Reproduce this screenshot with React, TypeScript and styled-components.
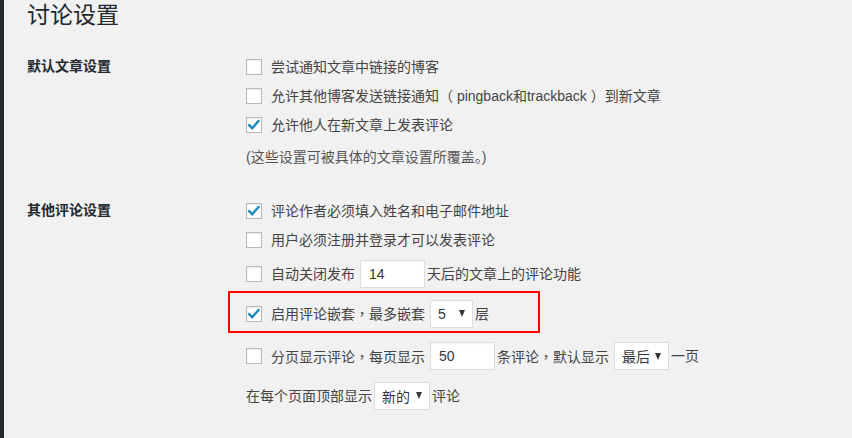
import React from 'react';
import styled, { createGlobalStyle } from 'styled-components';

const GlobalStyle = createGlobalStyle`
  html, body {
    margin: 0;
    padding: 0;
    background: #f1f1f1;
  }
  body {
    font-family: "Liberation Sans", "Noto Sans CJK SC", sans-serif;
    font-size: 14px;
    color: #444;
  }
`;

export default function App() {
  return (
    <>
      <GlobalStyle />
      <Page>
        <SideStrip />
        <Main>
          <Title>讨论设置</Title>

          <Section>
            <Label>默认文章设置</Label>
            <Fields>
              <Row $h={29}>
                <Checkbox />
                <Text>尝试通知文章中链接的博客</Text>
              </Row>
              <Row $h={29}>
                <Checkbox />
                <Text>
                  允许其他博客发送链接通知<Punct>（</Punct> pingback和trackback <Punct>）</Punct>到新文章
                </Text>
              </Row>
              <Row $h={29}>
                <Checkbox checked />
                <Text>允许他人在新文章上发表评论</Text>
              </Row>
              <Note>(这些设置可被具体的文章设置所覆盖。)</Note>
            </Fields>
          </Section>

          <Section $top={23}>
            <Label>其他评论设置</Label>
            <Fields>
              <Row $h={29}>
                <Checkbox checked />
                <Text>评论作者必须填入姓名和电子邮件地址</Text>
              </Row>
              <Row $h={29}>
                <Checkbox />
                <Text>用户必须注册并登录才可以发表评论</Text>
              </Row>
              <Row $h={39}>
                <Checkbox />
                <Text>自动关闭发布</Text>
                <NumberBox $w={65}>14</NumberBox>
                <Text>天后的文章上的评论功能</Text>
              </Row>
              <Highlight>
                <Checkbox checked />
                <Text>
                  启用评论嵌套<Punct>，</Punct>最多嵌套
                </Text>
                <Select $w={43}>5</Select>
                <Text>层</Text>
              </Highlight>
              <Row $h={40} $top={3}>
                <Checkbox />
                <Text>
                  分页显示评论<Punct>，</Punct>每页显示
                </Text>
                <NumberBox $w={65}>50</NumberBox>
                <Text>
                  条评论<Punct>，</Punct>默认显示
                </Text>
                <Select $w={55}>最后</Select>
                <Text>一页</Text>
              </Row>
              <Row $h={39}>
                <Text>在每个页面顶部显示</Text>
                <Select $w={56} $gap={2}>新的</Select>
                <Text>评论</Text>
              </Row>
            </Fields>
          </Section>
        </Main>
      </Page>
    </>
  );
}

function Checkbox({ checked }: { checked?: boolean }) {
  return (
    <Box>
      {checked && (
        <svg width="14" height="14" viewBox="0 0 14 14">
          <path
            d="M2.2 7.2 L5.2 10.2 L11.4 3.2"
            fill="none"
            stroke="#1e8cbe"
            strokeWidth="2.4"
            strokeLinecap="square"
          />
        </svg>
      )}
    </Box>
  );
}

function Select({ $w, $gap, children }: { $w: number; $gap?: number; children: React.ReactNode }) {
  return (
    <SelectBox $w={$w} $gap={$gap}>
      <span>{children}</span>
      <Arrow />
    </SelectBox>
  );
}

const Page = styled.div`
  display: flex;
  min-height: 100vh;
`;

const SideStrip = styled.div`
  width: 4px;
  flex-shrink: 0;
  background: #23282d;
`;

const Main = styled.div`
  flex: 1;
  padding-left: 23px;
`;

const Title = styled.h1`
  margin: 0;
  font-size: 23px;
  font-weight: 400;
  line-height: 30px;
  color: #23282d;
`;

const Section = styled.div<{ $top?: number }>`
  display: grid;
  grid-template-columns: 219px 1fr;
  margin-top: ${({ $top }) => $top ?? 22}px;
`;

const Label = styled.div`
  font-size: 14px;
  font-weight: 700;
  line-height: 29px;
  color: #23282d;
`;

const Fields = styled.div`
  display: flex;
  flex-direction: column;
`;

const Row = styled.div<{ $h: number; $top?: number }>`
  display: flex;
  align-items: center;
  height: ${({ $h }) => $h}px;
  margin-top: ${({ $top }) => $top ?? 0}px;
  white-space: nowrap;
`;

const Highlight = styled.div`
  display: flex;
  align-items: center;
  box-sizing: border-box;
  height: 42px;
  width: 312px;
  margin: -2px 0 0 -18px;
  padding: 3px 0 0 16px;
  border: 2px solid #f00;
  white-space: nowrap;
`;

const Text = styled.span`
  font-size: 14px;
  line-height: 20px;
  color: #444;
`;

const Punct = styled.span`
  font-family: "Noto Sans CJK TC", sans-serif;
`;

const Note = styled.div`
  height: 34px;
  display: flex;
  align-items: center;
  font-size: 14px;
  color: #555;
`;

const Box = styled.span`
  box-sizing: border-box;
  width: 16px;
  height: 16px;
  margin-right: 9px;
  flex-shrink: 0;
  display: flex;
  align-items: center;
  justify-content: center;
  background: #fff;
  border: 1px solid #b4b9be;
  box-shadow: inset 0 1px 2px rgba(0, 0, 0, 0.08);
`;

const NumberBox = styled.span<{ $w: number }>`
  box-sizing: border-box;
  display: flex;
  align-items: center;
  width: ${({ $w }) => $w}px;
  height: 28px;
  margin: 0 2px 0 5px;
  padding-left: 8px;
  background: #fff;
  border: 1px solid #ddd;
  box-shadow: inset 0 1px 2px rgba(0, 0, 0, 0.05);
  font-size: 14px;
  color: #32373c;
`;

const SelectBox = styled.span<{ $w: number; $gap?: number }>`
  box-sizing: border-box;
  display: flex;
  align-items: center;
  justify-content: space-between;
  width: ${({ $w }) => $w}px;
  height: 28px;
  margin: 0 2px 0 ${({ $gap }) => $gap ?? 5}px;
  padding: 0 7px 0 7px;
  background: #fff;
  border: 1px solid #ddd;
  font-size: 14px;
  color: #32373c;
`;

const Arrow = styled.span`
  width: 0;
  height: 0;
  border-left: 3.5px solid transparent;
  border-right: 3.5px solid transparent;
  border-top: 7px solid #32373c;
`;
